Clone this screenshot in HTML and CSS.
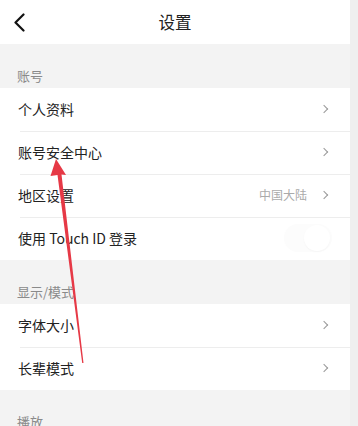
FILE: index.html
```html
<!DOCTYPE html>
<html lang="zh">
<head>
<meta charset="utf-8">
<link rel="stylesheet" href="styles.css">
</head>
<body>
<div class="page">
  <div class="col">
    <header class="nav">
      <svg class="back" width="13" height="19" viewBox="0 0 13 19"><path d="M10.5 1.5 L2.5 9.5 L10.5 17.5" fill="none" stroke="#111" stroke-width="2.2" stroke-linecap="round" stroke-linejoin="round"/></svg>
      <div class="title">设置</div>
    </header>

    <div class="label">账号</div>
    <div class="group">
      <div class="row"><span class="text">个人资料</span><span class="chev"></span></div>
      <div class="row"><span class="text">账号安全中心</span><span class="chev"></span></div>
      <div class="row"><span class="text">地区设置</span><span class="value">中国大陆</span><span class="chev"></span></div>
      <div class="row"><span class="text">使用 Touch ID 登录</span><span class="toggle"><span class="knob"></span></span></div>
    </div>

    <div class="label">显示/模式</div>
    <div class="group">
      <div class="row"><span class="text">字体大小</span><span class="chev"></span></div>
      <div class="row"><span class="text">长辈模式</span><span class="chev"></span></div>
    </div>

    <div class="label">播放</div>
  </div>
  <div class="strip"></div>

  <svg class="arrow" width="358" height="426" viewBox="0 0 358 426">
    <polygon points="56,159 66,175 61.5,174.5 83.5,363 82.2,363 57.5,175 50.5,176" fill="#e63946"/>
  </svg>
</div>
</body>
</html>
```

FILE: styles.css
```css
* { box-sizing: border-box; }
html, body { margin: 0; padding: 0; }
body {
  font-family: "Noto Sans CJK SC", "Noto Sans", sans-serif;
  background: #f3f3f3;
  width: 358px;
  height: 426px;
  overflow: hidden;
}
.page {
  position: relative;
  display: flex;
  width: 358px;
  height: 426px;
}
.col {
  width: 350px;
  background: #f3f3f3;
}
.strip {
  width: 8px;
  background: #efefef;
}
.nav {
  height: 44px;
  background: #fff;
  display: flex;
  align-items: center;
  position: relative;
  padding-left: 13px;
}
.back { display: block; }
.title {
  position: absolute;
  left: 0;
  right: 0;
  text-align: center;
  font-size: 16.5px;
  color: #222;
  pointer-events: none;
}
.label {
  height: 44px;
  display: flex;
  align-items: flex-end;
  padding: 0 0 0 17px;
  font-size: 13px;
  color: #8a8a8a;
  line-height: 24px;
}
.group { background: #fff; }
.row {
  height: 43px;
  display: flex;
  align-items: center;
  padding: 0 21px 2px 18px;
  position: relative;
}
.row + .row::before {
  content: "";
  position: absolute;
  top: 0;
  left: 20px;
  right: 0;
  height: 1px;
  background: #ededed;
}
.text {
  flex: 1;
  font-size: 14px;
  color: #222;
}
.value {
  font-size: 12px;
  color: #aaa;
  margin-right: 14px;
}
.chev {
  width: 6px;
  height: 6px;
  border-top: 1.3px solid #999;
  border-right: 1.3px solid #999;
  transform: rotate(45deg);
  margin-right: 2px;
}
.toggle {
  width: 48px;
  height: 28px;
  border-radius: 14px;
  background: #fcfcfc;
  margin-right: -3px;
  display: flex;
  align-items: center;
  justify-content: flex-end;
  padding-right: 2px;
}
.knob {
  width: 26px;
  height: 26px;
  border-radius: 50%;
  background: #fff;
  box-shadow: 0 1px 2px rgba(0,0,0,0.03);
}
.arrow {
  position: absolute;
  left: 0;
  top: 0;
  pointer-events: none;
}
```
